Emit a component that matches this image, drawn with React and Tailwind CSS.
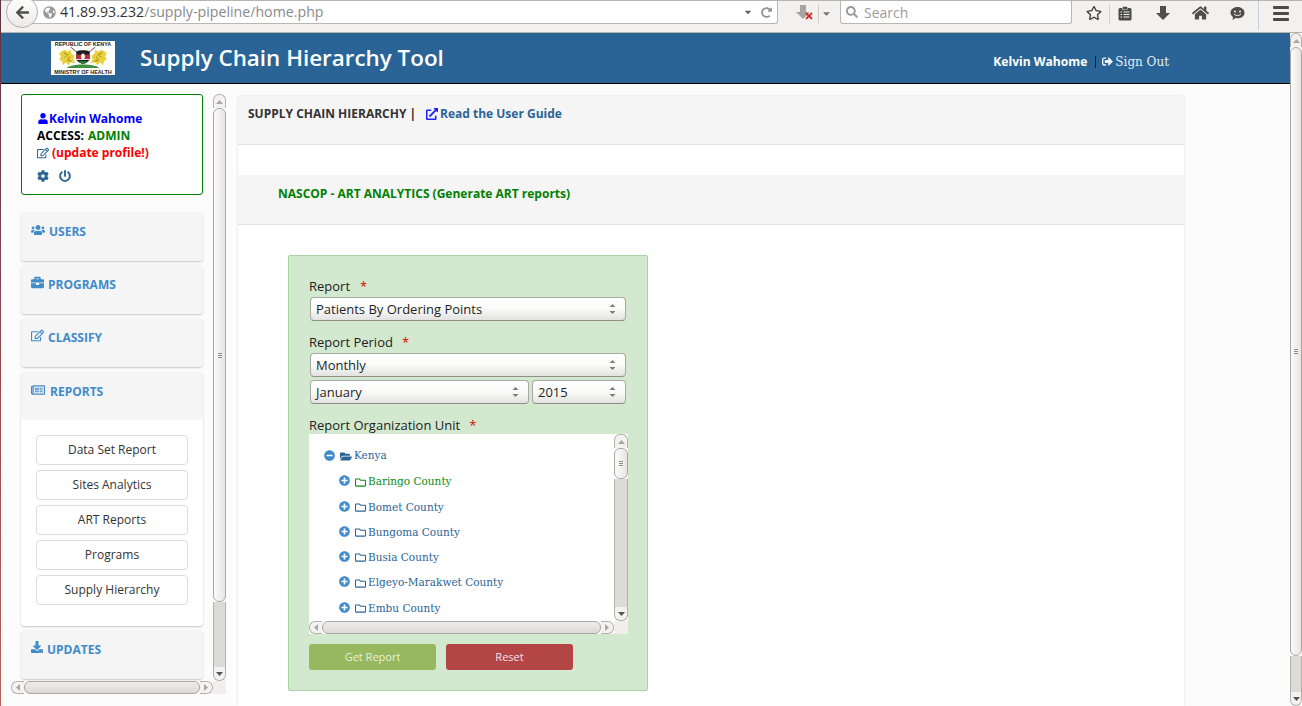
import React from "react";
import {
  FaUser, FaRegEdit, FaCog, FaPowerOff, FaUsers, FaBriefcase, FaRegNewspaper, FaDownload,
  FaExternalLinkAlt, FaSignOutAlt, FaMinusCircle, FaPlusCircle, FaFolderOpen, FaRegFolder,
  FaArrowLeft, FaGlobeAmericas, FaRegStar, FaHome, FaSearch, FaRedoAlt, FaCaretDown,
  FaTimes,
} from "react-icons/fa";

const sans = "font-['Open_Sans','Noto_Sans',sans-serif]";
const serif = "font-['DejaVu_Serif',serif]";

function ArrowV({ up }) {
  return (
    <div className={`h-[14px] shrink-0 bg-[#f3f2f0] border border-[#b5b2ac] flex items-center justify-center ${up ? "rounded-t-[6px] border-b-0" : "rounded-b-[6px] border-t-0"}`}>
      <svg width="7" height="4" viewBox="0 0 7 4"><path d={up ? "M0 4L3.5 0L7 4Z" : "M0 0L3.5 4L7 0Z"} fill={up ? "#a9a7a2" : "#55534f"} /></svg>
    </div>
  );
}

function Grip() {
  return (
    <div className="flex flex-col gap-[1px] items-center">
      <span className="w-[4px] h-[1px] bg-[#8f8d88]" />
      <span className="w-[4px] h-[1px] bg-[#8f8d88]" />
      <span className="w-[4px] h-[1px] bg-[#8f8d88]" />
    </div>
  );
}

function ScrollV({ thumb, className = "" }) {
  return (
    <div className={`flex flex-col ${className}`}>
      <ArrowV up />
      <div className="shrink-0 bg-gradient-to-r from-[#fbfbfa] to-[#e8e6e3] border border-[#aaa8a2] rounded-[6px] flex items-center justify-center" style={{ height: thumb }}>
        <Grip />
      </div>
      <div className="flex-1 bg-[#dcdbd8] border-x border-[#b5b2ac]" />
      <ArrowV />
    </div>
  );
}

function ScrollH({ className = "" }) {
  return (
    <div className={`flex h-[13px] ${className}`}>
      <div className="w-[13px] shrink-0 bg-[#f3f2f0] border border-r-0 border-[#b5b2ac] rounded-l-[6px] flex items-center justify-center">
        <svg width="4" height="7" viewBox="0 0 4 7"><path d="M4 0L0 3.5L4 7Z" fill="#a9a7a2" /></svg>
      </div>
      <div className="flex-1 bg-gradient-to-b from-[#eeedeb] to-[#dbdad7] border border-[#aaa8a2] rounded-[6px]" />
      <div className="w-[13px] shrink-0 bg-[#f3f2f0] border border-l-0 border-[#b5b2ac] rounded-r-[6px] flex items-center justify-center">
        <svg width="4" height="7" viewBox="0 0 4 7"><path d="M0 0L4 3.5L0 7Z" fill="#a9a7a2" /></svg>
      </div>
    </div>
  );
}

function Spin() {
  return (
    <svg width="7" height="12" viewBox="0 0 7 12" className="shrink-0">
      <path d="M0.5 4L3.5 1L6.5 4Z" fill="#7d7c78" />
      <path d="M0.5 8L3.5 11L6.5 8Z" fill="#7d7c78" />
    </svg>
  );
}

function Select({ label, className = "" }) {
  return (
    <div className={`h-[24px] rounded-[4px] border border-[#a9a8a3] border-b-[#8f8e89] bg-gradient-to-b from-[#ffffff] via-[#fafaf9] to-[#e2e2e0] flex items-center justify-between pl-[5px] pr-[9px] text-[13px] text-[#1f1f1f] ${className}`}>
      <span className="pt-[1px]">{label}</span>
      <Spin />
    </div>
  );
}

function Label({ text, gap }) {
  return (
    <div className="h-[20px] flex items-center text-[13px] text-[#222]">
      <span>{text}</span>
      <span className={`text-[#e00000] ${gap}`}>*</span>
    </div>
  );
}

function Panel({ icon, title, gap = "gap-[4px]", children, head = "h-[49px]", extra = "" }) {
  return (
    <div className={`w-[182px] mb-[4px] rounded-[4px] bg-white shadow-[0_1px_2px_rgba(0,0,0,0.22)] overflow-hidden shrink-0 ${extra}`}>
      <div className={`${head} bg-[#f5f5f5] pl-[10px] pt-[11px] text-[#428bca] text-[12px] font-bold flex items-start ${gap}`}>
        <span className="text-[14px] leading-[16px]">{icon}</span>
        <span className="leading-[18px]">{title}</span>
      </div>
      {children}
    </div>
  );
}

function SideBtn({ children }) {
  return (
    <div className="h-[30px] w-[152px] rounded-[4px] border border-[#dcdcdc] bg-white flex items-center justify-center text-[12px] text-[#333]">
      {children}
    </div>
  );
}

function TreeChild({ name, green, h = "h-[25px]" }) {
  const color = green ? "text-[#0c8a14]" : "text-[#2a6496]";
  return (
    <div className={`${h} pl-[30px] flex items-center ${color}`}>
      <FaPlusCircle className="text-[#428bca] w-[11px] h-[11px] mb-[3px]" />
      <FaRegFolder className="w-[11px] h-[11px] ml-[5px]" />
      <span className={`ml-[2px] text-[10.5px] ${serif}`}>{name}</span>
    </div>
  );
}

function Emblem() {
  return (
    <svg width="54" height="22" viewBox="0 0 54 23">
      <path d="M14 0L29 12M40 0L25 12" stroke="#4a3418" strokeWidth="0.9" />
      <path d="M4 5L8 3L11 5L14 3L15 7L18 9L17 13L19 17L14 16L12 19L9 16L6 19L5 15L2 13L4 10L2 7Z" fill="#e8d13c" />
      <path d="M50 5L46 3L43 5L40 3L39 7L36 9L37 13L35 17L40 16L42 19L45 16L48 19L49 15L52 13L50 10L52 7Z" fill="#e8d13c" />
      <path d="M7 6L11 8L8 11M13 10L11 14L15 15M47 6L43 8L46 11M41 10L43 14L39 15" stroke="#8c7414" strokeWidth="0.8" fill="none" />
      <path d="M20 5C23 3 31 3 34 5V12C34 15 30 17 27 18C24 17 20 15 20 12Z" fill="#1d1d1d" />
      <rect x="20" y="8" width="14" height="4.5" fill="#b92f2f" />
      <path d="M20 12.5H34V13.5H20Z" fill="#f4f4f4" />
      <path d="M22 15H32L27 18Z" fill="#2f8a38" />
      <ellipse cx="27" cy="10" rx="2" ry="3.2" fill="#f4f4f4" />
      <path d="M10 22C14 17 40 17 44 22Z" fill="#3f8f3f" />
    </svg>
  );
}

function BlockDown({ className, color }) {
  return (
    <svg className={className} width="16" height="16" viewBox="0 0 16 16">
      <path d="M5 1H11V8H15L8 15L1 8H5Z" fill={color} />
    </svg>
  );
}

function Toolbar() {
  return (
    <div className={`h-[33px] shrink-0 bg-[#f2f1ef] border-t border-[#b8b5b0] border-b border-b-[#b5b3ae] flex items-start relative ${sans}`}>
      <div className="relative z-10 w-[32px] h-[32px] -mt-[5px] ml-[5px] rounded-full bg-gradient-to-b from-[#ffffff] to-[#ecebe9] border border-[#b4b2ad] flex items-center justify-center shrink-0">
        <FaArrowLeft className="w-[15px] h-[15px] text-[#4f4d49]" />
      </div>
      <div className="h-[23px] w-[747px] -ml-[7px] bg-white border border-t-0 border-[#b9b7b1] rounded-br-[3px] flex items-center pl-[10px] pr-[3px] shrink-0">
        <FaGlobeAmericas className="ml-[1px] w-[13px] h-[13px] text-[#9a9a9a]" />
        <span className="ml-[4px] text-[14.2px] text-[#333]">41.89.93.232</span>
        <span className="text-[14.2px] text-[#8a8a8a]">/supply-pipeline/home.php</span>
        <FaCaretDown className="ml-auto w-[10px] h-[10px] text-[#66645f]" />
        <FaRedoAlt className="ml-[8px] mr-[2px] w-[11px] h-[11px] text-[#8b9097]" />
      </div>
      <div className="relative ml-[17px] mt-[3px] w-[16px] h-[16px] shrink-0">
        <BlockDown color="#a5a4a1" />
        <FaTimes className="absolute right-[-3px] bottom-[-1px] w-[10px] h-[10px] text-[#e02020]" />
      </div>
      <div className="ml-[7px] mt-[4px] w-[1px] h-[18px] bg-[#cfcdc9] shrink-0" />
      <FaCaretDown className="ml-[2px] mt-[7px] w-[11px] h-[11px] text-[#77756f] shrink-0" />
      <div className="h-[23px] w-[232px] ml-[8px] bg-white border border-t-0 border-[#b9b7b1] rounded-b-[3px] flex items-center pl-[5px] shrink-0">
        <FaSearch className="w-[12px] h-[12px] text-[#9a9a9a]" />
        <span className="ml-[6px] text-[14px] text-[#9c9c9c]">Search</span>
      </div>
      <FaRegStar className="ml-[14px] mt-[4px] w-[16px] h-[16px] text-[#3f3e3b] shrink-0" />
      <div className="ml-[7px] mt-[3px] w-[1px] h-[19px] bg-[#d3d1cd] shrink-0" />
      <svg className="ml-[8px] mt-[5px] shrink-0" width="14" height="15" viewBox="0 0 14 15">
        <rect x="0.5" y="2" width="13" height="12.5" rx="1.5" fill="#4a4a48" />
        <rect x="4.5" y="0.5" width="5" height="3" fill="#4a4a48" stroke="#f2f1ef" strokeWidth="0.5" />
        <path d="M2.5 6H4M5.5 6H11.5M2.5 8.5H4M5.5 8.5H11.5M2.5 11H4M5.5 11H11.5" stroke="#f2f1ef" strokeWidth="1.2" />
      </svg>
      <BlockDown className="ml-[23px] mt-[4px] shrink-0" color="#4f4e4b" />
      <FaHome className="ml-[21px] mt-[4px] w-[17px] h-[16px] text-[#4f4e4b] shrink-0" />
      <svg className="ml-[21px] mt-[5px] shrink-0" width="15" height="15" viewBox="0 0 15 15">
        <path d="M7.5 1C11.5 1 14.5 3.5 14.5 6.7C14.5 9.9 11.5 12.3 7.5 12.3C6.8 12.3 6.2 12.2 5.6 12.1L2.5 14L3 10.9C1.4 9.8 .5 8.4 .5 6.7C.5 3.5 3.5 1 7.5 1Z" fill="#4f4e4b" />
        <circle cx="5" cy="5.5" r="1" fill="#f2f1ef" /><circle cx="10" cy="5.5" r="1" fill="#f2f1ef" />
        <path d="M4 8C5.5 10 9.5 10 11 8" stroke="#f2f1ef" strokeWidth="1" fill="none" />
      </svg>
      <div className="ml-[13px] mt-[0px] w-[1px] h-[29px] bg-[#c6d0da] shrink-0" />
      <div className="ml-[14px] mt-[5px] w-[16px] flex flex-col gap-[3px] shrink-0">
        <span className="h-[3px] bg-[#4a4a48] rounded-[1px]" />
        <span className="h-[3px] bg-[#4a4a48] rounded-[1px]" />
        <span className="h-[3px] bg-[#4a4a48] rounded-[1px]" />
      </div>
    </div>
  );
}

function Logo() {
  return (
    <div className="w-[64px] h-[34px] bg-white flex flex-col items-center justify-between overflow-hidden shrink-0 font-['Liberation_Sans',sans-serif] text-[5.4px] font-bold text-[#222] leading-[6px] whitespace-nowrap">
      <span>REPUBLIC OF KENYA</span>
      <Emblem />
      <span>MINISTRY OF HEALTH</span>
    </div>
  );
}

function Header() {
  return (
    <div className={`h-[51px] shrink-0 bg-[#2a6496] border-b border-black flex items-center ${sans}`}>
      <div className="ml-[50px]"><Logo /></div>
      <div className="ml-[25px] text-[22.4px] font-semibold text-white leading-[28px] -mt-[1px]">Supply Chain Hierarchy Tool</div>
      <div className="ml-auto mr-[121px] flex items-center mt-[8px]">
        <span className="text-[12.1px] font-bold text-white">Kelvin Wahome</span>
        <span className="ml-[8px] w-[1px] h-[12px] bg-[#10202e]" />
        <FaSignOutAlt className="ml-[6px] w-[11px] h-[11px] text-[#eef3f7]" />
        <span className={`ml-[2px] text-[12px] text-[#e6edf3] ${serif}`}>Sign Out</span>
      </div>
    </div>
  );
}

function Sidebar() {
  return (
    <div className="ml-[10px] mt-[10px] w-[215px] shrink-0 flex flex-col">
      <div className="h-[587px] flex">
        <div className="w-[202px] pl-[10px] flex flex-col overflow-hidden">
          <div className="w-[182px] h-[101px] shrink-0 mb-[17px] border border-[#008000] rounded-[3px] bg-white pl-[15px] pt-[15px] text-[12px] font-bold leading-[17px]">
            <div className="flex items-center text-[#0000ff]"><FaUser className="w-[12px] h-[11px]" /><span>Kelvin Wahome</span></div>
            <div className="text-black">ACCESS:&nbsp;<span className="text-[#008000] ml-[1px]">ADMIN</span></div>
            <div className="flex items-center text-[#ff0000]"><FaRegEdit className="w-[12px] h-[12px] mr-[3px] text-[#2a6496]" />(update profile!)</div>
            <div className="flex items-center gap-[10px] mt-[9px] text-[#2a6496]">
              <FaCog className="w-[12px] h-[12px]" />
              <FaPowerOff className="w-[12px] h-[12px]" />
            </div>
          </div>
          <Panel icon={<FaUsers className="w-[14px] h-[14px]" />} title="USERS" />
          <Panel icon={<FaBriefcase className="w-[13px] h-[13px]" />} title="PROGRAMS" />
          <Panel icon={<FaRegEdit className="w-[13px] h-[13px]" />} title="CLASSIFY" />
          <Panel icon={<FaRegNewspaper className="w-[14px] h-[14px]" />} title="REPORTS" gap="gap-[5px]" head="h-[48px]" extra="mt-[1px]">
            <div className="pl-[15px] pt-[15px] pb-[21px] flex flex-col gap-[5px]">
              <SideBtn>Data Set Report</SideBtn>
              <SideBtn>Sites Analytics</SideBtn>
              <SideBtn>ART Reports</SideBtn>
              <SideBtn>Programs</SideBtn>
              <SideBtn>Supply Hierarchy</SideBtn>
            </div>
          </Panel>
          <Panel icon={<FaDownload className="w-[12px] h-[12px]" />} title="UPDATES" gap="gap-[4px]" />
        </div>
        <ScrollV thumb={494} className="w-[13px] shrink-0" />
      </div>
      <div className="flex">
        <ScrollH className="w-[202px]" />
        <div className="w-[13px] h-[13px] bg-[#f0efed]" />
      </div>
    </div>
  );
}

function FormBox() {
  return (
    <div className="ml-[50px] mt-[30px] w-[360px] h-[436px] shrink-0 border border-[#a8d3a4] rounded-[2px] bg-[#d2e9d0] pl-[20px] pt-[21px]">
      <Label text="Report" gap="ml-[10px]" />
      <Select label="Patients By Ordering Points" className="ml-[1px] w-[316px]" />
      <div className="mt-[12px]"><Label text="Report Period" gap="ml-[9px]" /></div>
      <Select label="Monthly" className="ml-[1px] w-[316px]" />
      <div className="ml-[1px] mt-[3px] flex gap-[3px] w-[316px]">
        <Select label="January" className="w-[219px]" />
        <Select label="2015" className="w-[94px]" />
      </div>
      <div className="mt-[12px] mb-[-2px]"><Label text="Report Organization Unit" gap="ml-[9px]" /></div>
      <div className="w-[319px] h-[200px] flex flex-col bg-white">
        <div className="h-[187px] flex">
          <div className="w-[305px] h-[187px] overflow-hidden pt-[9px] bg-white">
            <div className="h-[26px] pl-[15px] flex items-center text-[#2a6496]">
              <FaMinusCircle className="text-[#428bca] w-[11px] h-[11px] mb-[2px]" />
              <FaFolderOpen className="w-[12px] h-[11px] ml-[5px]" />
              <span className={`ml-[2px] text-[10.5px] ${serif}`}>Kenya</span>
            </div>
            <TreeChild name="Baringo County" green h="h-[26px]" />
            <TreeChild name="Bomet County" />
            <TreeChild name="Bungoma County" />
            <TreeChild name="Busia County" />
            <TreeChild name="Elgeyo-Marakwet County" h="h-[26px]" />
            <TreeChild name="Embu County" />
          </div>
          <ScrollV thumb={31} className="w-[14px] shrink-0" />
        </div>
        <div className="flex">
          <ScrollH className="w-[305px]" />
          <div className="w-[14px] h-[13px] bg-[#f0efed]" />
        </div>
      </div>
      <div className="mt-[10px] flex gap-[10px] text-[11px]">
        <div className="w-[127px] h-[26px] rounded-[3px] bg-[#97b85f] text-[#e9efdc] flex items-center justify-center">Get Report</div>
        <div className="w-[127px] h-[26px] rounded-[3px] bg-[#b44545] text-[#f3e0e0] flex items-center justify-center">Reset</div>
      </div>
    </div>
  );
}

function Content() {
  return (
    <div className="ml-[12px] mt-[12px] w-[946px] shrink-0 bg-white rounded-t-[4px] shadow-[0_0_2px_rgba(0,0,0,0.18)] flex flex-col">
      <div className="h-[49px] bg-[#f5f5f5] border-b border-[#e3e3e3] rounded-t-[4px] pl-[10px] pt-[9px] flex self-stretch text-[12px] font-bold leading-[18px] items-start">
        <span className="text-[#333]">SUPPLY CHAIN HIERARCHY</span>
        <span className="ml-[3px] text-[#222]">|</span>
        <FaExternalLinkAlt className="ml-[10px] mr-[2px] mt-[3px] w-[12px] h-[12px] text-[#1f1fff]" />
        <span className="text-[#2a6496]">Read the User Guide</span>
      </div>
      <div className="h-[30px]" />
      <div className="h-[50px] bg-[#f5f5f5] border-b border-[#e3e3e3] pl-[40px] pt-[10px] text-[12px] font-bold leading-[18px] text-[#008000]">
        NASCOP - ART ANALYTICS (Generate ART reports)
      </div>
      <FormBox />
    </div>
  );
}

export default function App() {
  return (
    <div className={`w-[1302px] h-[706px] overflow-hidden flex bg-[#fcfcfc] ${sans}`}>
      <div className="w-[1px] shrink-0 bg-gradient-to-b from-[#5e3344] to-[#bd625c]" />
      <div className="flex-1 min-w-0 flex flex-col">
        <Toolbar />
        <div className="flex-1 min-h-0 flex">
          <div className="flex-1 min-w-0 flex flex-col">
            <Header />
            <div className="flex-1 min-h-0 flex overflow-hidden">
              <Sidebar />
              <Content />
            </div>
          </div>
          <ScrollV thumb={609} className="w-[12px] shrink-0" />
        </div>
      </div>
    </div>
  );
}
